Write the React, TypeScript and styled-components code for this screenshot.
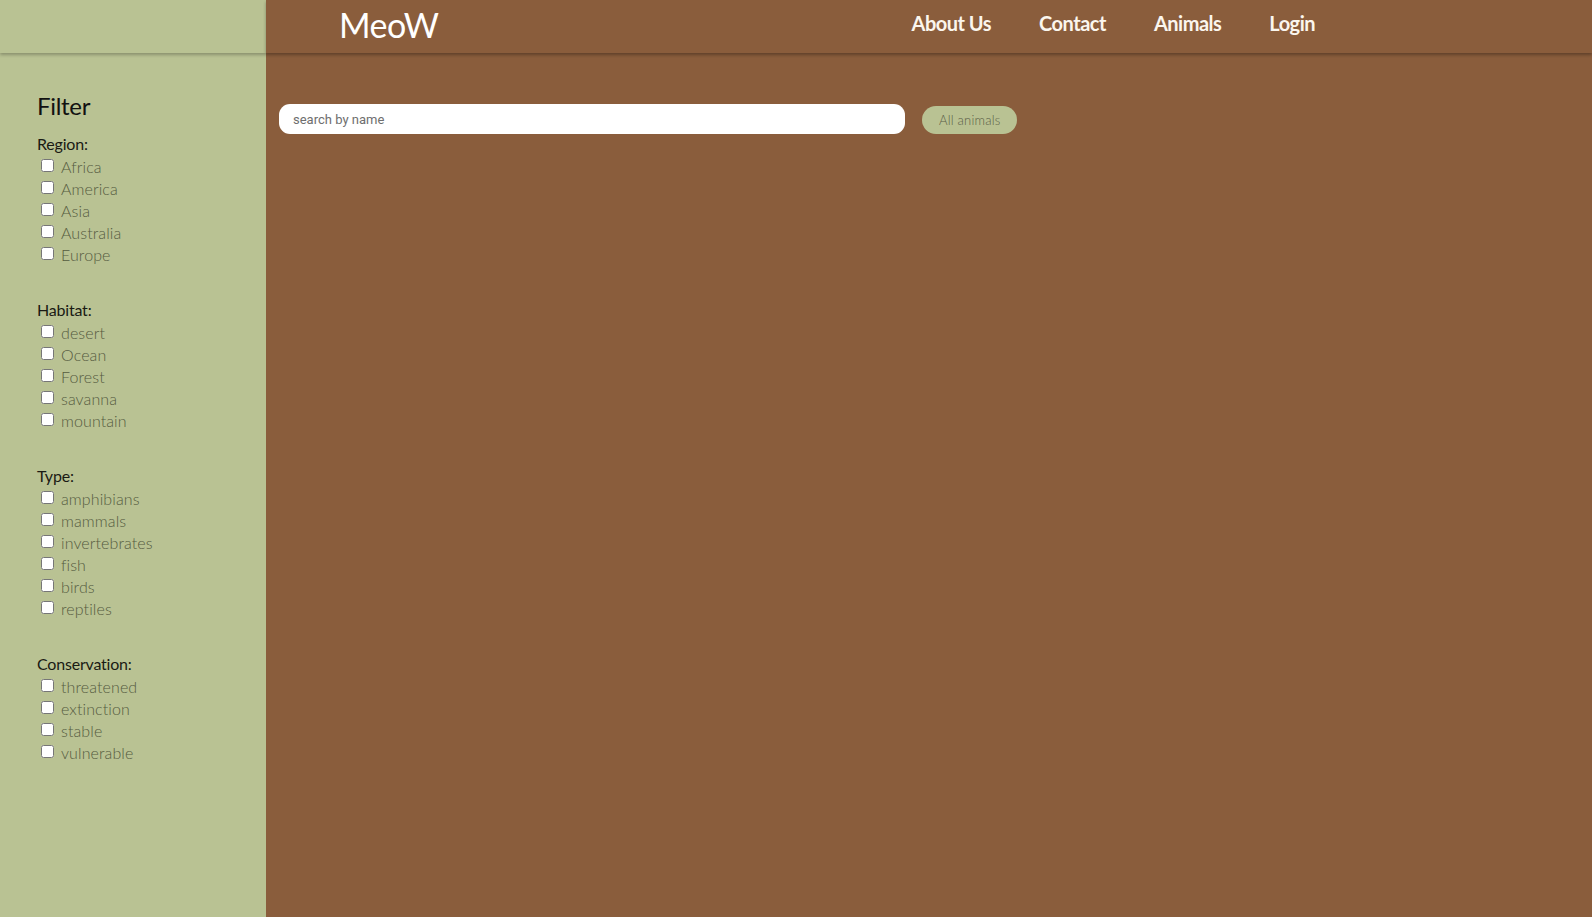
import React from "react";
import styled, { createGlobalStyle } from "styled-components";

const GREEN = "#b9c293";
const BROWN = "#8a5d3c";

const Global = createGlobalStyle`
  html, body { margin: 0; padding: 0; height: 100%; }
  body { background: ${BROWN}; font-family: "Lato", "Open Sans", sans-serif; }
  #root { min-height: 100vh; }
`;

const Page = styled.div`
  display: grid;
  grid-template-columns: 266px 1fr;
  grid-template-rows: 53px 1fr;
  min-height: 100vh;
`;

const HeaderLeft = styled.div`
  background: ${GREEN};
  box-shadow: 0 2px 3px rgba(0, 0, 0, 0.25);
  position: relative;
  z-index: 2;
`;

const HeaderBar = styled.header`
  background: ${BROWN};
  display: flex;
  align-items: center;
  padding: 0 277px 7px 73px;
  box-shadow: 0 2px 3px rgba(0, 0, 0, 0.3);
  position: relative;
  z-index: 2;
`;

const Logo = styled.div`
  color: #fff;
  font-family: "Lato", sans-serif;
  font-size: 34px;
  font-weight: 400;
  letter-spacing: -0.5px;
  margin-top: 2px;
`;

const Nav = styled.nav`
  margin-left: auto;
  display: flex;
  gap: 48px;
`;

const NavLink = styled.a`
  color: #fbf6ee;
  font-family: "Lato", sans-serif;
  font-size: 20px;
  font-weight: 700;
  letter-spacing: -0.5px;
  text-decoration: none;
  cursor: pointer;
`;

const Sidebar = styled.aside`
  background: ${GREEN};
  padding: 38px 0 0 37px;
  font-family: "Lato", sans-serif;
`;

const Title = styled.h2`
  margin: 0 0 13px;
  font-size: 24px;
  font-weight: 400;
  color: #111;
  letter-spacing: -0.3px;
`;

const Section = styled.div`
  margin-bottom: 34px;
`;

const Label = styled.div`
  font-size: 16px;
  line-height: 22px;
  color: #1a1a14;
  letter-spacing: -0.2px;
`;

const Option = styled.label`
  display: flex;
  align-items: center;
  height: 22px;
  font-size: 16px;
  font-weight: 300;
  color: #555b3f;
  padding-left: 4px;
  letter-spacing: 0.1px;
`;

const Check = styled.input.attrs({ type: "checkbox" })`
  width: 13px;
  height: 13px;
  margin: 0 7px 2px 0;
`;

const Main = styled.main`
  background: ${BROWN};
  padding: 51px 13px;
  display: flex;
  align-items: flex-start;
  gap: 17px;
`;

const Search = styled.input`
  width: 626px;
  height: 30px;
  box-sizing: border-box;
  border: none;
  border-radius: 11px;
  background: #fff;
  padding: 0 14px;
  font-family: "Roboto", sans-serif;
  font-size: 13px;
  outline: none;
  &::placeholder { color: #6e6e6e; }
`;

const Button = styled.button`
  margin-top: 2px;
  height: 28px;
  padding: 0 17px;
  border: none;
  border-radius: 14px;
  background: ${GREEN};
  color: #5a5e47;
  font-family: "Lato", sans-serif;
  font-weight: 300;
  font-size: 13px;
  letter-spacing: 0.2px;
  cursor: pointer;
`;

const filters: { label: string; options: string[] }[] = [
  { label: "Region:", options: ["Africa", "America", "Asia", "Australia", "Europe"] },
  { label: "Habitat:", options: ["desert", "Ocean", "Forest", "savanna", "mountain"] },
  { label: "Type:", options: ["amphibians", "mammals", "invertebrates", "fish", "birds", "reptiles"] },
  { label: "Conservation:", options: ["threatened", "extinction", "stable", "vulnerable"] },
];

export default function App() {
  return (
    <>
      <Global />
      <Page>
        <HeaderLeft />
        <HeaderBar>
          <Logo>MeoW</Logo>
          <Nav>
            <NavLink>About Us</NavLink>
            <NavLink>Contact</NavLink>
            <NavLink>Animals</NavLink>
            <NavLink>Login</NavLink>
          </Nav>
        </HeaderBar>
        <Sidebar>
          <Title>Filter</Title>
          {filters.map((f) => (
            <Section key={f.label}>
              <Label>{f.label}</Label>
              {f.options.map((o) => (
                <Option key={o}>
                  <Check />
                  {o}
                </Option>
              ))}
            </Section>
          ))}
        </Sidebar>
        <Main>
          <Search placeholder="search by name" />
          <Button>All animals</Button>
        </Main>
      </Page>
    </>
  );
}
